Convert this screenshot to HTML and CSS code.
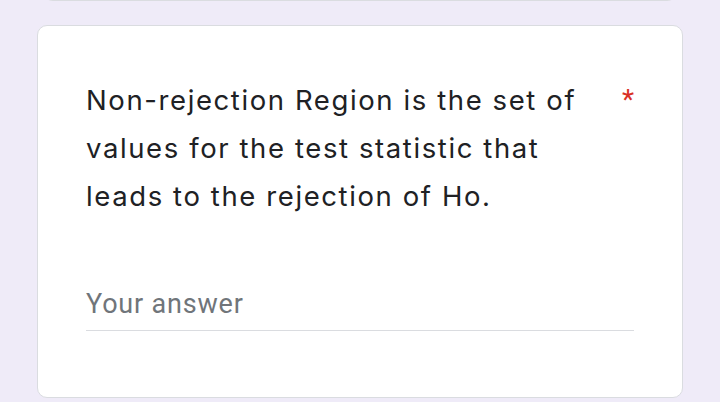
FILE: index.html
```html
<!DOCTYPE html>
<html lang="en">
<head>
<meta charset="utf-8">
<link rel="stylesheet" href="styles.css">
</head>
<body>
<div class="page">
  <div class="card card-prev"></div>
  <div class="card question">
    <div class="title-row">
      <div class="title">Non-rejection Region is the set of values for the test statistic that leads to the rejection of Ho.</div>
      <span class="required">*</span>
    </div>
    <div class="answer">
      <span class="placeholder">Your answer</span>
    </div>
  </div>
</div>
</body>
</html>
```
FILE: styles.css
```css
html, body {
  margin: 0;
  padding: 0;
  background: #efebf8;
  height: 100%;
  overflow: hidden;
}
.page {
  display: flex;
  flex-direction: column;
  gap: 24px;
  padding: 0 37px;
  font-family: Roboto, "Noto Sans", sans-serif;
}
.card {
  background: #fff;
  border: 1px solid #dadce0;
  border-radius: 10px;
}
.card-prev {
  height: 20px;
  margin: -20px 6px 0;
  border-top: none;
  border-radius: 0 0 10px 10px;
}
.question {
  padding: 50px 48px 66px;
}
.title-row {
  display: flex;
  align-items: flex-start;
}
.title {
  flex: 1;
  font-family: Inter, Roboto, sans-serif;
  font-size: 27.5px;
  line-height: 48px;
  color: #202124;
  letter-spacing: 1.6px;
}
.required {
  color: #d93025;
  font-size: 28px;
  line-height: 48px;
  padding-left: 24px;
}
.answer {
  margin-top: 66px;
  border-bottom: 1px solid #dadce0;
  padding-bottom: 8px;
}
.placeholder {
  display: block;
  font-size: 27px;
  line-height: 36px;
  color: #70757a;
  letter-spacing: 0.8px;
}
```
